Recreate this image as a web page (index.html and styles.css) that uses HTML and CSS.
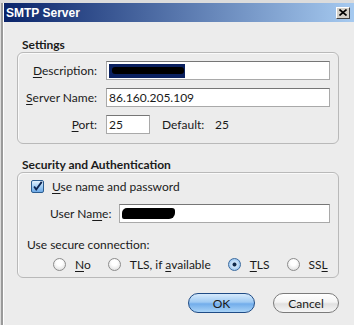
FILE: index.html
```html
<!DOCTYPE html>
<html lang="en">
<head>
    <meta charset="UTF-8">
    <title>SMTP Server</title>
    <link rel="stylesheet" href="styles.css">
</head>
<body>
    <div class="window">
        <div class="titlebar">
            <span class="title">SMTP Server</span>
            <span class="close">
                <svg width="8" height="7" viewBox="0 0 8 7"><path d="M0.5 0.5 L7.5 6.5 M7.5 0.5 L0.5 6.5" stroke="#000" stroke-width="1.6"/></svg>
            </span>
        </div>
        <div class="content">
            <div class="legend">Settings</div>
            <div class="group settings">
                <div class="row">
                    <span class="lbl"><u>D</u>escription:</span>
                    <span class="field wide"><span class="blot sel"><span class="scrib"></span></span></span>
                </div>
                <div class="row">
                    <span class="lbl"><u>S</u>erver Name:</span>
                    <span class="field wide">86.160.205.109</span>
                </div>
                <div class="row">
                    <span class="lbl"><u>P</u>ort:</span>
                    <span class="field port">25</span>
                    <span class="default">Default:</span>
                    <span class="defval">25</span>
                </div>
            </div>

            <div class="legend second">Security and Authentication</div>
            <div class="group security">
                <div class="checkrow">
                    <span class="check">
                        <svg width="13" height="13" viewBox="0 0 13 13"><path d="M2.5 6.5 L5 10 L11.5 1" fill="none" stroke="#0d2450" stroke-width="2.2"/></svg>
                    </span>
                    <span><u>U</u>se name and password</span>
                </div>
                <div class="userrow">
                    <span class="ulbl">User Na<u>m</u>e:</span>
                    <span class="field wide"><span class="blot ink"></span></span>
                </div>
                <div class="secure">Use secure connection:</div>
                <div class="radios">
                    <span class="opt"><span class="radio"></span><span><u>N</u>o</span></span>
                    <span class="opt"><span class="radio"></span><span>TLS, if <u>a</u>vailable</span></span>
                    <span class="opt"><span class="radio on"></span><span><u>T</u>LS</span></span>
                    <span class="opt"><span class="radio"></span><span>SS<u>L</u></span></span>
                </div>
            </div>

            <div class="buttons">
                <span class="btn ok">OK</span>
                <span class="btn cancel">Cancel</span>
            </div>
        </div>
    </div>
</body>
</html>
```

FILE: styles.css
```css
* {
    margin: 0;
    padding: 0;
    box-sizing: border-box;
}
body {
    background-color: #dcdcdc;
    width: 354px;
    height: 325px;
    overflow: hidden;
    font-family: 'Lato', sans-serif;
    font-size: 12px;
    color: #1a1a1a;
}
u {
    text-decoration: underline;
    text-underline-offset: 2px;
}
.window {
    margin: 3px 0 0 4px;
    height: 322px;
    background-color: #ececec;
    box-shadow: -1px 0 0 #ffffff, -3px 0 0 #9a9a9a;
}
.titlebar {
    height: 19px;
    display: flex;
    align-items: center;
    justify-content: space-between;
    padding: 0 4px 0 2px;
    background: linear-gradient(to right, #0a246a, #a6caf0);
}
.title {
    font-family: 'Liberation Sans', sans-serif;
    font-weight: bold;
    font-size: 12px;
    color: #ffffff;
}
.close {
    width: 14px;
    height: 12px;
    display: flex;
    align-items: center;
    justify-content: center;
    background-color: #d4d0c8;
    border: 1px solid;
    border-color: #ffffff #404040 #404040 #ffffff;
}
.content {
    padding: 15px 15px 0 13px;
}
.legend {
    font-weight: bold;
    line-height: 15px;
    padding-left: 5px;
}
.legend.second {
    margin-top: 13px;
}
.group {
    border: 1px solid #b9b9b9;
    border-radius: 6px;
    box-shadow: inset 1px 1px 0 #fafafa;
}
.settings {
    display: flex;
    flex-direction: column;
    gap: 8px;
    padding: 8px 8px 9px 0;
}
.row {
    display: flex;
    align-items: center;
    height: 19px;
    white-space: nowrap;
}
.lbl {
    width: 79px;
    text-align: right;
    margin-right: 9px;
}
.field {
    height: 19px;
    display: flex;
    align-items: center;
    padding: 0 2px;
    background-color: #ffffff;
    border: 1px solid #a9a9a9;
    border-top-color: #767676;
    line-height: 15px;
}
.wide {
    flex: 1;
}
.port {
    width: 44px;
    margin-right: 12px;
}
.default {
    width: 53px;
}
.blot.sel {
    width: 76px;
    height: 14px;
    background-color: #0b2160;
    display: flex;
    align-items: center;
    padding-left: 3px;
}
.scrib {
    width: 72px;
    height: 7px;
    border-radius: 3px;
    background-color: #000000;
}
.blot.ink {
    width: 53px;
    height: 11px;
    background-color: #000000;
    border-radius: 5px 3px 6px 2px;
}
.security {
    padding: 6px 8px 5px 13px;
}
.checkrow {
    display: flex;
    align-items: center;
    gap: 8px;
    height: 15px;
    line-height: 15px;
}
.check {
    width: 13px;
    height: 13px;
    display: flex;
    align-items: center;
    justify-content: center;
    border: 1px solid #2b5c8f;
    border-radius: 2px;
    background: linear-gradient(#e3f1fd, #9ccaf3 55%, #6da9e6);
    overflow: visible;
}
.userrow {
    display: flex;
    align-items: center;
    margin-top: 10px;
    padding-left: 19px;
    height: 19px;
    white-space: nowrap;
}
.ulbl {
    width: 69px;
}
.secure {
    margin-top: 14px;
    margin-left: -4px;
    line-height: 15px;
}
.radios {
    display: flex;
    gap: 17px;
    margin-top: 5px;
    padding-left: 22px;
    height: 15px;
    line-height: 15px;
    white-space: nowrap;
}
.opt {
    display: flex;
    align-items: center;
    gap: 9px;
}
.radio {
    width: 13px;
    height: 13px;
    border-radius: 50%;
    border: 1px solid #8c8c8c;
    background: radial-gradient(circle at 50% 35%, #ffffff 30%, #d6d6d6 100%);
}
.radio.on {
    border-color: #3b6b9f;
    background: radial-gradient(circle, #0f2a4c 0 1.6px, #cfe6fb 2.4px, #7fb5ea 100%);
}
.buttons {
    display: flex;
    justify-content: flex-end;
    gap: 18px;
    margin-top: 15px;
}
.btn {
    width: 67px;
    height: 20px;
    display: flex;
    align-items: center;
    justify-content: center;
    border-radius: 10px;
    line-height: 15px;
}
.ok {
    border: 1px solid #1f4b85;
    background: linear-gradient(#d6eafc, #9fcaf3 45%, #72adeb 55%, #a9d3f7);
}
.cancel {
    width: 66px;
    border: 1px solid #7b7b7b;
    background: linear-gradient(#ffffff, #f4f4f4 45%, #e0e0e0 55%, #f6f6f6);
}
```
